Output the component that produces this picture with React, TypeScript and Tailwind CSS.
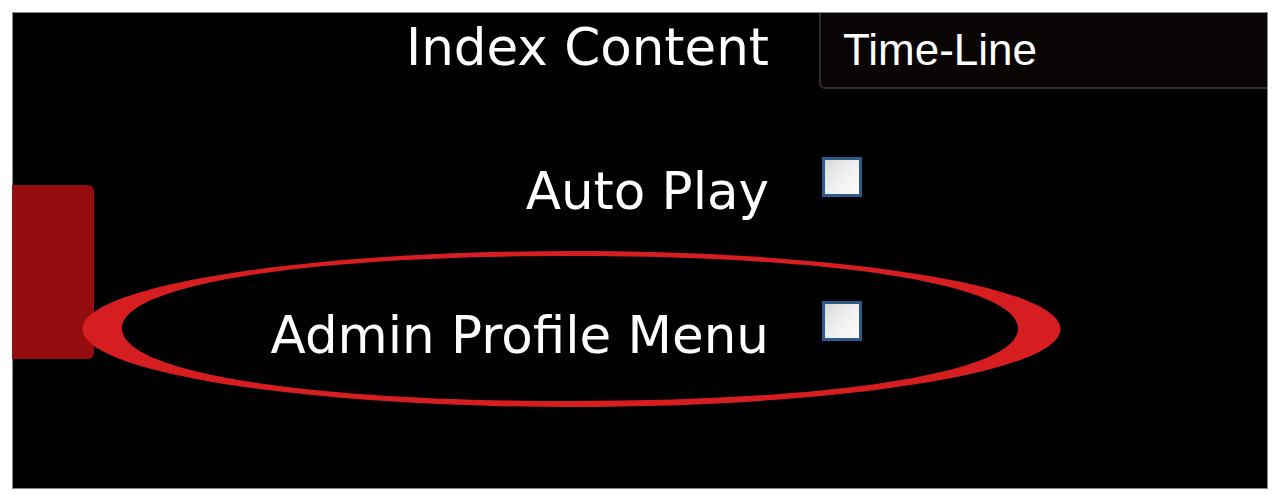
import React from 'react';

const labelCls =
  "w-[756px] shrink-0 text-right text-[51.5px] leading-[60px] text-white font-['DejaVu_Sans',sans-serif]";

function Check() {
  return (
    <input
      type="checkbox"
      readOnly
      className="ml-[53px] -mt-[4px] h-10 w-10 shrink-0 appearance-none border-[3px] border-[#2b5b8c] bg-gradient-to-br from-[#d9d9d6] via-[#efefed] to-[#fdfdfd]"
    />
  );
}

export default function App() {
  return (
    <div className="relative h-[501px] w-[1280px] bg-white p-3">
      {/* Settings panel */}
      <div className="h-[477px] w-[1256px] overflow-hidden border border-[#8a8a8a] bg-black">
        <div className="flex h-[148px] items-start">
          <div className={`${labelCls} pt-[4px]`}>Index Content</div>
          <div className="ml-[50px] -mt-[6px] h-[82px] w-[480px] shrink-0 rounded-bl-[6px] border-2 border-[#2e2e2e] bg-[#0a0505] pl-[22px] pt-[16px] text-[44px] leading-[50px] text-white font-['Liberation_Sans',Arial,sans-serif]">
            Time-Line
          </div>
        </div>
        <div className="flex h-[144px] items-start">
          <div className={labelCls}>Auto Play</div>
          <Check />
        </div>
        <div className="flex h-[144px] items-start">
          <div className={labelCls}>Admin Profile Menu</div>
          <Check />
        </div>
      </div>

      {/* side tab peeking in */}
      <div className="absolute left-[12px] top-[185px] h-[174px] w-[82px] rounded-r-[6px] bg-[#930d0f]" />

      {/* red callout ring */}
      <svg
        className="pointer-events-none absolute left-0 top-0"
        width="1280"
        height="501"
        viewBox="0 0 1280 501"
      >
        <path
          fill="#d61d1f"
          fillRule="evenodd"
          d="M82.5 329 C82.5 285.9 301.4 251 571.5 251 C841.6 251 1060.5 285.9 1060.5 329 C1060.5 372.1 841.6 407 571.5 407 C301.4 407 82.5 372.1 82.5 329 Z M122 328.5 C122 285 301.2 256 570 256 C838.8 256 1018 285 1018 328.5 C1018 372 838.8 401 570 401 C301.2 401 122 372 122 328.5 Z"
        />
      </svg>
    </div>
  );
}
